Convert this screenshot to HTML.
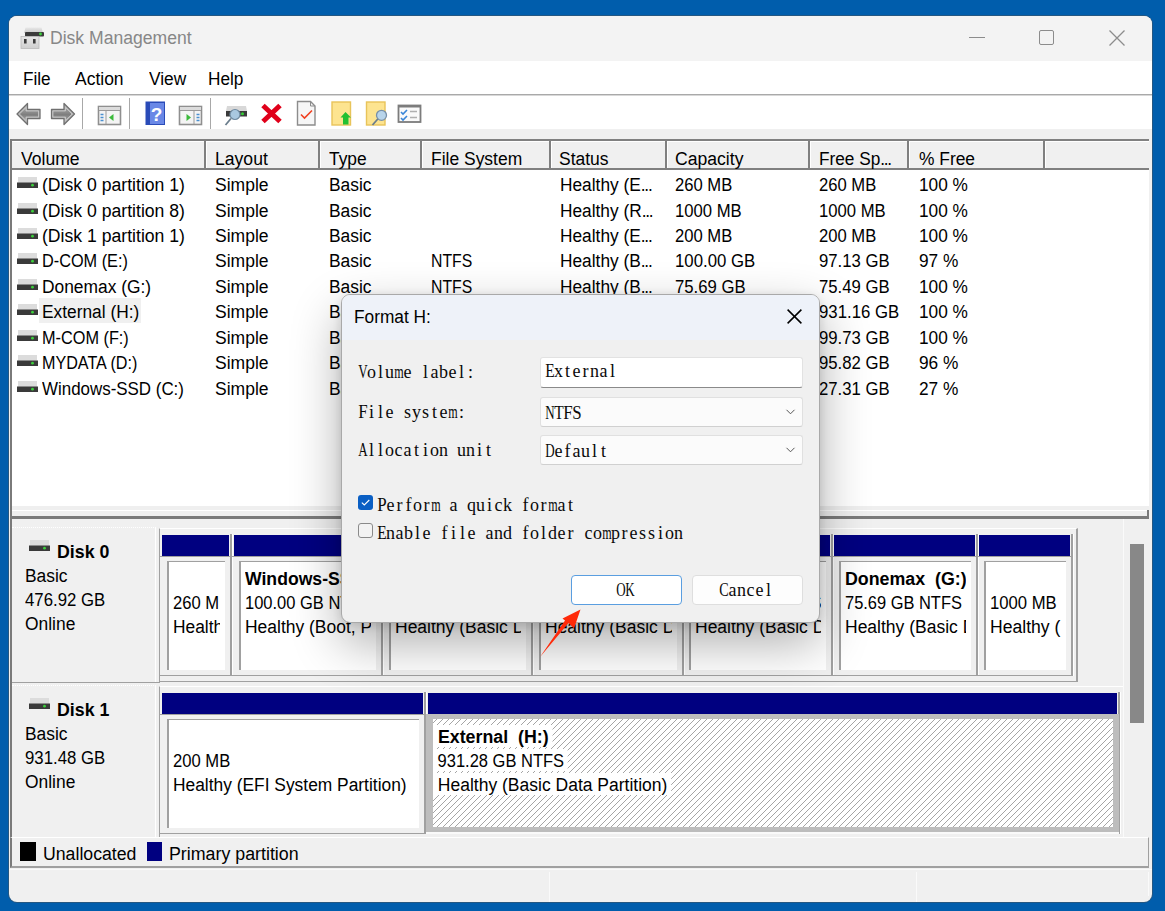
<!DOCTYPE html>
<html><head><meta charset="utf-8">
<style>
*{margin:0;padding:0;box-sizing:border-box}
html,body{width:1165px;height:911px;overflow:hidden}
body{background:#005dac;font-family:"Liberation Sans",sans-serif;font-size:18px;color:#000;position:relative}
.a{position:absolute}
.t{position:absolute;white-space:pre;line-height:18px;font-size:18px;height:18px}
.b{font-weight:bold}
.el{letter-spacing:-1.3px}
.win{left:9px;top:16px;width:1143px;height:886px;border-radius:8px;background:#f0f0f0;box-shadow:0 0 0 1px rgba(80,80,80,.45)}
.title{left:9px;top:16px;width:1143px;height:45px;background:#f3f3f3;border-radius:8px 8px 0 0}
.menu{left:9px;top:61px;width:1143px;height:33px;background:#fff}
.menuline{left:9px;top:94px;width:1143px;height:2px;background:linear-gradient(#a9a9a9 50%,#d8d8d8 50%)}
.tool{left:9px;top:96px;width:1143px;height:33px;background:#fff}
.sep{width:1px;background:#a8a8a8;top:98px;height:31px}
.lv{left:10px;top:139px;width:1139px;height:371px;background:#fff;border-top:2px solid #808080;border-left:2px solid #808080}
.hdr{top:141px;height:29px;background:#f0f0f0;border-top:1px solid #fff;border-bottom:2px solid #808080}
.hs{top:141px;width:2px;height:27px;background:#808080}
.hw{top:142px;width:1px;height:26px;background:#fff}
.ico{position:absolute;width:21px;height:12px}
svg{position:absolute;overflow:visible}
.hatch{background-color:#fff;background-image:repeating-linear-gradient(-45deg,#b0b0b0 0,#b0b0b0 1px,transparent 1px,transparent 4.24px)}
.mono{font-family:"Liberation Serif",serif;position:absolute;white-space:nowrap;color:#0a0a0a;font-size:18px;line-height:18px;height:18px}
.mono i{display:inline-block;width:9px;text-align:center;font-style:normal;height:18px;vertical-align:top;position:relative}
.mono b{position:absolute;left:50%;top:0;font-weight:normal}
</style></head><body>
<div class="a win"></div>
<div class="a title"></div>
<svg style="left:21px;top:26px" width="24" height="23" viewBox="0 0 24 23">
<defs><linearGradient id="gt" x1="0" y1="0" x2="0" y2="1"><stop offset="0" stop-color="#e8e8e8"/><stop offset="1" stop-color="#c8c8c8"/></linearGradient>
<linearGradient id="gb" x1="0" y1="0" x2="0" y2="1"><stop offset="0" stop-color="#e6e6e6"/><stop offset="1" stop-color="#cfcfcf"/></linearGradient></defs>
<path d="M4.5 1.5h16l1.5 5.5h-19z" fill="url(#gt)"/>
<rect x="4" y="6" width="19" height="4.5" rx="1" fill="#3a3a3a"/>
<circle cx="19.5" cy="8" r="1.4" fill="#3fd13f"/>
<rect x="0" y="10.5" width="18" height="12" fill="url(#gb)" stroke="#b8b8b8" stroke-width=".8"/>
<rect x="3" y="13" width="2.6" height="4.5" fill="#3c3c3c"/>
<rect x="12" y="13" width="2.6" height="4.5" fill="#3c3c3c"/>
</svg>
<div class="t" style="left:50px;top:29px;color:#878787;transform:scaleX(0.976);transform-origin:0 0">Disk Management</div>
<div class="a" style="left:969px;top:37px;width:16px;height:1px;background:#8c8c8c"></div>
<div class="a" style="left:1039px;top:30px;width:15px;height:15px;border:1.3px solid #8c8c8c;border-radius:2px"></div>
<svg style="left:1109px;top:30px" width="16" height="16" viewBox="0 0 16 16"><path d="M0.5 0.5L15.5 15.5M15.5 0.5L0.5 15.5" stroke="#8c8c8c" stroke-width="1.3"/></svg>
<div class="a menu"></div>
<div class="a menuline"></div>
<div class="t" style="left:23px;top:70px;transform:scaleX(0.954);transform-origin:0 0">File</div>
<div class="t" style="left:75px;top:70px;transform:scaleX(0.971);transform-origin:0 0">Action</div>
<div class="t" style="left:149px;top:70px;transform:scaleX(0.962);transform-origin:0 0">View</div>
<div class="t" style="left:208px;top:70px;transform:scaleX(0.957);transform-origin:0 0">Help</div>
<div class="a tool"></div>
<div class="a sep" style="left:82px"></div>
<div class="a sep" style="left:129px"></div>
<div class="a sep" style="left:210px"></div>
<svg style="left:0;top:0" width="1" height="1">
<defs>
<linearGradient id="ga" x1="0" y1="0" x2="0" y2="1"><stop offset="0" stop-color="#a8a8a8"/><stop offset=".55" stop-color="#7e7e7e"/><stop offset="1" stop-color="#a4a4a4"/></linearGradient>
</defs></svg>
<svg style="left:0;top:0" width="1165" height="140" viewBox="0 0 1165 140">
<path d="M17 114L27.5 103.5V109.5H40V118.5H27.5V124.5Z" fill="#b9b9b9" stroke="#707070" stroke-width="1.3" stroke-linejoin="round"/><path d="M19.5 114L26 107.5V111H38.5V117H26V120.5Z" fill="url(#ga)" stroke="#cfcfcf" stroke-width=".7"/>
<path d="M74.5 114L64 103.5V109.5H51.5V118.5H64V124.5Z" fill="#b9b9b9" stroke="#707070" stroke-width="1.3" stroke-linejoin="round"/><path d="M72 114L65.5 107.5V111H53V117H65.5V120.5Z" fill="url(#ga)" stroke="#cfcfcf" stroke-width=".7"/>
<!-- window left -->
<rect x="98.5" y="106.5" width="22" height="18" fill="#f4f4f4" stroke="#8f8f8f" stroke-width="1.6"/>
<rect x="99" y="107" width="21" height="3" fill="#dcdcdc"/>
<line x1="99" y1="110.5" x2="120" y2="110.5" stroke="#9a9a9a" stroke-width="1"/>
<line x1="106" y1="111" x2="106" y2="124" stroke="#9a9a9a" stroke-width="1"/>
<path d="M100.5 114.5h3M100.5 117.5h3M100.5 120.5h3" stroke="#4a90d0" stroke-width="1.3"/>
<path d="M109 117.5L113.5 114V121Z" fill="#3cba3c"/>
<!-- help -->
<rect x="145.5" y="101.5" width="19.5" height="23.5" fill="#2a4bb8"/>
<rect x="150" y="103" width="14" height="21" fill="#6a88e6"/>
<text x="156.5" y="121" font-family="Liberation Sans" font-weight="bold" font-size="19" fill="#fff" text-anchor="middle">?</text>
<!-- window right -->
<rect x="179.5" y="106.5" width="22" height="18" fill="#f4f4f4" stroke="#8f8f8f" stroke-width="1.6"/>
<rect x="180" y="107" width="21" height="3" fill="#dcdcdc"/>
<line x1="180" y1="110.5" x2="201" y2="110.5" stroke="#9a9a9a" stroke-width="1"/>
<line x1="194" y1="111" x2="194" y2="124" stroke="#9a9a9a" stroke-width="1"/>
<path d="M196.5 114.5h3M196.5 117.5h3M196.5 120.5h3" stroke="#4a90d0" stroke-width="1.3"/>
<path d="M191 117.5L186.5 114V121Z" fill="#3cba3c"/>
<!-- disk magnifier -->
<path d="M227 106h19l1 5h-21z" fill="#d8d8d8"/>
<rect x="226" y="111" width="21" height="5.5" fill="#3a3a3a"/>
<circle cx="242.5" cy="113.8" r="1.5" fill="#34d034"/>
<circle cx="235" cy="114.5" r="5" fill="#a9c8e0" stroke="#6f8aa0" stroke-width="1.2"/>
<line x1="231" y1="118.5" x2="225.5" y2="125" stroke="#6a7d8c" stroke-width="1.8"/>
<!-- red x -->
<path d="M263 105.5L280 121.5M280 105.5L263 121.5" stroke="#e0001a" stroke-width="5"/>
<!-- doc -->
<path d="M297.5 101.5h13l4.5 4.5v19h-17.5z" fill="#f6f6f6" stroke="#8c8c8c" stroke-width="1.4"/>
<path d="M310.5 101.5v4.5h4.5" fill="none" stroke="#8c8c8c" stroke-width="1"/>
<path d="M301 114.5L304.5 118L312 110.5" fill="none" stroke="#f04020" stroke-width="1.6"/>
<!-- yellow up -->
<rect x="332" y="102" width="18.5" height="23" fill="#fde490" stroke="#e8c45a" stroke-width="1.4"/>
<path d="M340.5 117.5L345.5 112L351 117.5H348.5V124.5H343V117.5Z" fill="#22c032"/>
<!-- yellow magnifier -->
<rect x="366.5" y="102" width="18.5" height="23" fill="#fde490" stroke="#e8c45a" stroke-width="1.4"/>
<circle cx="381.5" cy="115.3" r="5" fill="#b8d4ea" stroke="#7890a8" stroke-width="1.3"/>
<line x1="377.8" y1="119" x2="372.5" y2="125" stroke="#6a7d8c" stroke-width="1.8"/>
<!-- checklist -->
<rect x="398.5" y="105.5" width="22" height="16.5" fill="#fafafa" stroke="#7c7c7c" stroke-width="1.8"/>
<rect x="398" y="105" width="23" height="2.5" fill="#7c7c7c"/>
<path d="M401 112l2 2 4-4M401 118l2 2 4-4" fill="none" stroke="#3a86d8" stroke-width="1.6"/>
<path d="M410 111.5h7M410 117.5h7" stroke="#b0b0b0" stroke-width="1.3"/>
</svg>
<div class="a lv"></div>
<div class="a hdr" style="left:12px;width:1137px"></div>
<div class="a hs" style="left:204px"></div><div class="a hw" style="left:206px"></div>
<div class="a hs" style="left:318px"></div><div class="a hw" style="left:320px"></div>
<div class="a hs" style="left:420px"></div><div class="a hw" style="left:422px"></div>
<div class="a hs" style="left:549px"></div><div class="a hw" style="left:551px"></div>
<div class="a hs" style="left:665px"></div><div class="a hw" style="left:667px"></div>
<div class="a hs" style="left:808px"></div><div class="a hw" style="left:810px"></div>
<div class="a hs" style="left:907px"></div><div class="a hw" style="left:909px"></div>
<div class="a hs" style="left:1043px"></div><div class="a hw" style="left:1045px"></div>
<div class="t" style="left:21px;top:150px;transform:scaleX(0.976);transform-origin:0 0">Volume</div>
<div class="t" style="left:215px;top:150px;transform:scaleX(0.977);transform-origin:0 0">Layout</div>
<div class="t" style="left:329px;top:150px;transform:scaleX(0.966);transform-origin:0 0">Type</div>
<div class="t" style="left:431px;top:150px;transform:scaleX(0.970);transform-origin:0 0">File System</div>
<div class="t" style="left:559px;top:150px;transform:scaleX(0.971);transform-origin:0 0">Status</div>
<div class="t" style="left:675px;top:150px;transform:scaleX(0.977);transform-origin:0 0">Capacity</div>
<div class="t" style="left:819px;top:150px;transform:scaleX(0.957);transform-origin:0 0">Free Sp<span class="el">...</span></div>
<div class="t" style="left:919px;top:150px;transform:scaleX(0.966);transform-origin:0 0">% Free</div>
<div class="a" style="left:39px;top:298px;width:102px;height:25px;background:#f0f0f0"></div>
<svg style="left:17px;top:177px" width="21" height="12" viewBox="0 0 21 12"><rect x="1" y="0" width="19" height="6" fill="#dcdcdc"/><rect x="0" y="5.5" width="21" height="5.5" fill="#3a3a3a"/><circle cx="15.5" cy="8.2" r="1.4" fill="#3bd03b"/></svg>
<div class="t" style="left:42px;top:176px;transform:scaleX(0.979);transform-origin:0 0">(Disk 0 partition 1)</div>
<div class="t" style="left:215px;top:176px;transform:scaleX(0.973);transform-origin:0 0">Simple</div>
<div class="t" style="left:329px;top:176px;transform:scaleX(0.967);transform-origin:0 0">Basic</div>
<div class="t" style="left:560px;top:176px;transform:scaleX(0.961);transform-origin:0 0">Healthy (E<span class="el">...</span></div>
<div class="t" style="left:675px;top:176px;transform:scaleX(0.923);transform-origin:0 0">260 MB</div>
<div class="t" style="left:819px;top:176px;transform:scaleX(0.923);transform-origin:0 0">260 MB</div>
<div class="t" style="left:919px;top:176px;transform:scaleX(0.958);transform-origin:0 0">100 %</div>
<svg style="left:17px;top:203px" width="21" height="12" viewBox="0 0 21 12"><rect x="1" y="0" width="19" height="6" fill="#dcdcdc"/><rect x="0" y="5.5" width="21" height="5.5" fill="#3a3a3a"/><circle cx="15.5" cy="8.2" r="1.4" fill="#3bd03b"/></svg>
<div class="t" style="left:42px;top:202px;transform:scaleX(0.979);transform-origin:0 0">(Disk 0 partition 8)</div>
<div class="t" style="left:215px;top:202px;transform:scaleX(0.973);transform-origin:0 0">Simple</div>
<div class="t" style="left:329px;top:202px;transform:scaleX(0.967);transform-origin:0 0">Basic</div>
<div class="t" style="left:560px;top:202px;transform:scaleX(0.960);transform-origin:0 0">Healthy (R<span class="el">...</span></div>
<div class="t" style="left:675px;top:202px;transform:scaleX(0.926);transform-origin:0 0">1000 MB</div>
<div class="t" style="left:819px;top:202px;transform:scaleX(0.926);transform-origin:0 0">1000 MB</div>
<div class="t" style="left:919px;top:202px;transform:scaleX(0.958);transform-origin:0 0">100 %</div>
<svg style="left:17px;top:228px" width="21" height="12" viewBox="0 0 21 12"><rect x="1" y="0" width="19" height="6" fill="#dcdcdc"/><rect x="0" y="5.5" width="21" height="5.5" fill="#3a3a3a"/><circle cx="15.5" cy="8.2" r="1.4" fill="#3bd03b"/></svg>
<div class="t" style="left:42px;top:227px;transform:scaleX(0.979);transform-origin:0 0">(Disk 1 partition 1)</div>
<div class="t" style="left:215px;top:227px;transform:scaleX(0.973);transform-origin:0 0">Simple</div>
<div class="t" style="left:329px;top:227px;transform:scaleX(0.967);transform-origin:0 0">Basic</div>
<div class="t" style="left:560px;top:227px;transform:scaleX(0.961);transform-origin:0 0">Healthy (E<span class="el">...</span></div>
<div class="t" style="left:675px;top:227px;transform:scaleX(0.923);transform-origin:0 0">200 MB</div>
<div class="t" style="left:819px;top:227px;transform:scaleX(0.923);transform-origin:0 0">200 MB</div>
<div class="t" style="left:919px;top:227px;transform:scaleX(0.958);transform-origin:0 0">100 %</div>
<svg style="left:17px;top:253px" width="21" height="12" viewBox="0 0 21 12"><rect x="1" y="0" width="19" height="6" fill="#dcdcdc"/><rect x="0" y="5.5" width="21" height="5.5" fill="#3a3a3a"/><circle cx="15.5" cy="8.2" r="1.4" fill="#3bd03b"/></svg>
<div class="t" style="left:42px;top:252px;transform:scaleX(0.904);transform-origin:0 0">D-COM (E:)</div>
<div class="t" style="left:215px;top:252px;transform:scaleX(0.973);transform-origin:0 0">Simple</div>
<div class="t" style="left:329px;top:252px;transform:scaleX(0.967);transform-origin:0 0">Basic</div>
<div class="t" style="left:431px;top:252px;transform:scaleX(0.878);transform-origin:0 0">NTFS</div>
<div class="t" style="left:560px;top:252px;transform:scaleX(0.961);transform-origin:0 0">Healthy (B<span class="el">...</span></div>
<div class="t" style="left:675px;top:252px;transform:scaleX(0.932);transform-origin:0 0">100.00 GB</div>
<div class="t" style="left:819px;top:252px;transform:scaleX(0.929);transform-origin:0 0">97.13 GB</div>
<div class="t" style="left:919px;top:252px;transform:scaleX(0.960);transform-origin:0 0">97 %</div>
<svg style="left:17px;top:279px" width="21" height="12" viewBox="0 0 21 12"><rect x="1" y="0" width="19" height="6" fill="#dcdcdc"/><rect x="0" y="5.5" width="21" height="5.5" fill="#3a3a3a"/><circle cx="15.5" cy="8.2" r="1.4" fill="#3bd03b"/></svg>
<div class="t" style="left:42px;top:278px;transform:scaleX(0.965);transform-origin:0 0">Donemax (G:)</div>
<div class="t" style="left:215px;top:278px;transform:scaleX(0.973);transform-origin:0 0">Simple</div>
<div class="t" style="left:329px;top:278px;transform:scaleX(0.967);transform-origin:0 0">Basic</div>
<div class="t" style="left:431px;top:278px;transform:scaleX(0.878);transform-origin:0 0">NTFS</div>
<div class="t" style="left:560px;top:278px;transform:scaleX(0.961);transform-origin:0 0">Healthy (B<span class="el">...</span></div>
<div class="t" style="left:675px;top:278px;transform:scaleX(0.929);transform-origin:0 0">75.69 GB</div>
<div class="t" style="left:819px;top:278px;transform:scaleX(0.929);transform-origin:0 0">75.49 GB</div>
<div class="t" style="left:919px;top:278px;transform:scaleX(0.958);transform-origin:0 0">100 %</div>
<svg style="left:17px;top:304px" width="21" height="12" viewBox="0 0 21 12"><rect x="1" y="0" width="19" height="6" fill="#dcdcdc"/><rect x="0" y="5.5" width="21" height="5.5" fill="#3a3a3a"/><circle cx="15.5" cy="8.2" r="1.4" fill="#3bd03b"/></svg>
<div class="t" style="left:42px;top:303px;transform:scaleX(0.963);transform-origin:0 0">External (H:)</div>
<div class="t" style="left:215px;top:303px;transform:scaleX(0.973);transform-origin:0 0">Simple</div>
<div class="t" style="left:329px;top:303px;transform:scaleX(0.967);transform-origin:0 0">Basic</div>
<div class="t" style="left:431px;top:303px;transform:scaleX(0.878);transform-origin:0 0">NTFS</div>
<div class="t" style="left:560px;top:303px;transform:scaleX(0.961);transform-origin:0 0">Healthy (B<span class="el">...</span></div>
<div class="t" style="left:675px;top:303px;transform:scaleX(0.932);transform-origin:0 0">931.28 GB</div>
<div class="t" style="left:819px;top:303px;transform:scaleX(0.932);transform-origin:0 0">931.16 GB</div>
<div class="t" style="left:919px;top:303px;transform:scaleX(0.958);transform-origin:0 0">100 %</div>
<svg style="left:17px;top:330px" width="21" height="12" viewBox="0 0 21 12"><rect x="1" y="0" width="19" height="6" fill="#dcdcdc"/><rect x="0" y="5.5" width="21" height="5.5" fill="#3a3a3a"/><circle cx="15.5" cy="8.2" r="1.4" fill="#3bd03b"/></svg>
<div class="t" style="left:42px;top:329px;transform:scaleX(0.904);transform-origin:0 0">M-COM (F:)</div>
<div class="t" style="left:215px;top:329px;transform:scaleX(0.973);transform-origin:0 0">Simple</div>
<div class="t" style="left:329px;top:329px;transform:scaleX(0.967);transform-origin:0 0">Basic</div>
<div class="t" style="left:431px;top:329px;transform:scaleX(0.878);transform-origin:0 0">NTFS</div>
<div class="t" style="left:560px;top:329px;transform:scaleX(0.961);transform-origin:0 0">Healthy (B<span class="el">...</span></div>
<div class="t" style="left:675px;top:329px;transform:scaleX(0.932);transform-origin:0 0">200.00 GB</div>
<div class="t" style="left:819px;top:329px;transform:scaleX(0.929);transform-origin:0 0">99.73 GB</div>
<div class="t" style="left:919px;top:329px;transform:scaleX(0.958);transform-origin:0 0">100 %</div>
<svg style="left:17px;top:355px" width="21" height="12" viewBox="0 0 21 12"><rect x="1" y="0" width="19" height="6" fill="#dcdcdc"/><rect x="0" y="5.5" width="21" height="5.5" fill="#3a3a3a"/><circle cx="15.5" cy="8.2" r="1.4" fill="#3bd03b"/></svg>
<div class="t" style="left:42px;top:354px;transform:scaleX(0.896);transform-origin:0 0">MYDATA (D:)</div>
<div class="t" style="left:215px;top:354px;transform:scaleX(0.973);transform-origin:0 0">Simple</div>
<div class="t" style="left:329px;top:354px;transform:scaleX(0.967);transform-origin:0 0">Basic</div>
<div class="t" style="left:431px;top:354px;transform:scaleX(0.878);transform-origin:0 0">NTFS</div>
<div class="t" style="left:560px;top:354px;transform:scaleX(0.961);transform-origin:0 0">Healthy (B<span class="el">...</span></div>
<div class="t" style="left:675px;top:354px;transform:scaleX(0.932);transform-origin:0 0">100.00 GB</div>
<div class="t" style="left:819px;top:354px;transform:scaleX(0.929);transform-origin:0 0">95.82 GB</div>
<div class="t" style="left:919px;top:354px;transform:scaleX(0.960);transform-origin:0 0">96 %</div>
<svg style="left:17px;top:381px" width="21" height="12" viewBox="0 0 21 12"><rect x="1" y="0" width="19" height="6" fill="#dcdcdc"/><rect x="0" y="5.5" width="21" height="5.5" fill="#3a3a3a"/><circle cx="15.5" cy="8.2" r="1.4" fill="#3bd03b"/></svg>
<div class="t" style="left:42px;top:380px;transform:scaleX(0.940);transform-origin:0 0">Windows-SSD (C:)</div>
<div class="t" style="left:215px;top:380px;transform:scaleX(0.973);transform-origin:0 0">Simple</div>
<div class="t" style="left:329px;top:380px;transform:scaleX(0.967);transform-origin:0 0">Basic</div>
<div class="t" style="left:431px;top:380px;transform:scaleX(0.878);transform-origin:0 0">NTFS</div>
<div class="t" style="left:560px;top:380px;transform:scaleX(0.961);transform-origin:0 0">Healthy (B<span class="el">...</span></div>
<div class="t" style="left:675px;top:380px;transform:scaleX(0.932);transform-origin:0 0">100.00 GB</div>
<div class="t" style="left:819px;top:380px;transform:scaleX(0.929);transform-origin:0 0">27.31 GB</div>
<div class="t" style="left:919px;top:380px;transform:scaleX(0.960);transform-origin:0 0">27 %</div>
<div class="a" style="left:12px;top:506px;width:1137px;height:4px;background:#efefef"></div>
<div class="a" style="left:12px;top:510px;width:1137px;height:1px;background:#fff"></div>
<div class="a" style="left:12px;top:511px;width:1137px;height:5px;background:#efefef"></div>
<div class="a" style="left:10px;top:516px;width:1139px;height:3px;background:#7a7a7a"></div>
<div class="a" style="left:1147px;top:510px;width:2px;height:8px;background:#7a7a7a"></div>
<div class="a" style="left:10px;top:139px;width:2px;height:728px;background:#7a7a7a"></div>
<div class="a" style="left:1123px;top:519px;width:1px;height:318px;background:#fafafa"></div>
<div class="a" style="left:1130px;top:544px;width:14px;height:179px;background:#888"></div>
<div class="a" style="left:12px;top:527px;width:144px;height:1px;border-top:1px dotted #fff"></div>
<div class="a" style="left:155px;top:528px;width:1px;height:154px;background:#fff"></div>
<div class="a" style="left:12px;top:682px;width:148px;height:1px;background:#a0a0a0"></div>
<svg style="left:29px;top:540px" width="21" height="12" viewBox="0 0 21 12"><rect x="1" y="0" width="19" height="6" fill="#dcdcdc"/><rect x="0" y="5.5" width="21" height="5.5" fill="#3a3a3a"/><circle cx="15.5" cy="8.2" r="1.4" fill="#3bd03b"/></svg>
<div class="t b" style="left:57px;top:543px;transform:scaleX(0.987);transform-origin:0 0">Disk 0</div>
<div class="t" style="left:25px;top:567px;transform:scaleX(0.967);transform-origin:0 0">Basic</div>
<div class="t" style="left:25px;top:591px;transform:scaleX(0.932);transform-origin:0 0">476.92 GB</div>
<div class="t" style="left:25px;top:615px;transform:scaleX(0.967);transform-origin:0 0">Online</div>
<div class="a" style="left:159px;top:528px;width:919px;height:154px;border-top:1px solid #fff;border-left:1px solid #a0a0a0;border-right:2px solid #a0a0a0;border-bottom:1px solid #a0a0a0"></div>
<div class="a" style="left:162px;top:535px;width:67px;height:21px;background:#000080"></div>
<div class="a" style="left:160px;top:556px;width:70px;height:1px;background:#a0a0a0"></div>
<div class="a" style="left:160px;top:675px;width:71px;height:1px;background:#a0a0a0"></div>
<div class="a" style="left:230px;top:534px;width:2px;height:142px;background:#a0a0a0"></div>
<div class="a" style="left:232px;top:534px;width:1px;height:142px;background:#fff"></div>
<div class="a" style="left:167px;top:561px;width:58px;height:109px;background:#fff;border-top:1px solid #a0a0a0;border-left:2px solid #a0a0a0"></div>
<div class="a" style="left:173px;top:567px;width:47px;height:86px;overflow:hidden">
<div class="t" style="left:0;top:27px;transform:scaleX(0.923);transform-origin:0 0">260 MB</div>
<div class="t" style="left:0;top:51px;transform:scaleX(0.965);transform-origin:0 0">Healthy (EFI System Partition)</div>
</div>
<div class="a" style="left:234px;top:535px;width:146px;height:21px;background:#000080"></div>
<div class="a" style="left:232px;top:556px;width:149px;height:1px;background:#a0a0a0"></div>
<div class="a" style="left:232px;top:675px;width:150px;height:1px;background:#a0a0a0"></div>
<div class="a" style="left:381px;top:534px;width:2px;height:142px;background:#a0a0a0"></div>
<div class="a" style="left:383px;top:534px;width:1px;height:142px;background:#fff"></div>
<div class="a" style="left:239px;top:561px;width:137px;height:109px;background:#fff;border-top:1px solid #a0a0a0;border-left:2px solid #a0a0a0"></div>
<div class="a" style="left:245px;top:567px;width:126px;height:86px;overflow:hidden">
<div class="t b" style="left:0;top:3px;transform:scaleX(0.979);transform-origin:0 0">Windows-SSD  (C:)</div>
<div class="t" style="left:0;top:27px;transform:scaleX(0.916);transform-origin:0 0">100.00 GB NTFS</div>
<div class="t" style="left:0;top:51px;transform:scaleX(0.970);transform-origin:0 0">Healthy (Boot, Page File, Crash Dump, Basic Data Partition)</div>
</div>
<div class="a" style="left:384px;top:535px;width:146px;height:21px;background:#000080"></div>
<div class="a" style="left:382px;top:556px;width:149px;height:1px;background:#a0a0a0"></div>
<div class="a" style="left:382px;top:675px;width:150px;height:1px;background:#a0a0a0"></div>
<div class="a" style="left:531px;top:534px;width:2px;height:142px;background:#a0a0a0"></div>
<div class="a" style="left:533px;top:534px;width:1px;height:142px;background:#fff"></div>
<div class="a" style="left:389px;top:561px;width:137px;height:109px;background:#fff;border-top:1px solid #a0a0a0;border-left:2px solid #a0a0a0"></div>
<div class="a" style="left:395px;top:567px;width:126px;height:86px;overflow:hidden">
<div class="t b" style="left:0;top:3px;transform:scaleX(0.962);transform-origin:0 0">MYDATA  (D:)</div>
<div class="t" style="left:0;top:27px;transform:scaleX(0.916);transform-origin:0 0">100.00 GB NTFS</div>
<div class="t" style="left:0;top:51px;transform:scaleX(0.972);transform-origin:0 0">Healthy (Basic Data Partition)</div>
</div>
<div class="a" style="left:534px;top:535px;width:147px;height:21px;background:#000080"></div>
<div class="a" style="left:532px;top:556px;width:150px;height:1px;background:#a0a0a0"></div>
<div class="a" style="left:532px;top:675px;width:151px;height:1px;background:#a0a0a0"></div>
<div class="a" style="left:682px;top:534px;width:2px;height:142px;background:#a0a0a0"></div>
<div class="a" style="left:684px;top:534px;width:1px;height:142px;background:#fff"></div>
<div class="a" style="left:539px;top:561px;width:138px;height:109px;background:#fff;border-top:1px solid #a0a0a0;border-left:2px solid #a0a0a0"></div>
<div class="a" style="left:545px;top:567px;width:127px;height:86px;overflow:hidden">
<div class="t b" style="left:0;top:3px;transform:scaleX(0.966);transform-origin:0 0">D-COM  (E:)</div>
<div class="t" style="left:0;top:27px;transform:scaleX(0.916);transform-origin:0 0">100.00 GB NTFS</div>
<div class="t" style="left:0;top:51px;transform:scaleX(0.972);transform-origin:0 0">Healthy (Basic Data Partition)</div>
</div>
<div class="a" style="left:684px;top:535px;width:146px;height:21px;background:#000080"></div>
<div class="a" style="left:682px;top:556px;width:149px;height:1px;background:#a0a0a0"></div>
<div class="a" style="left:682px;top:675px;width:150px;height:1px;background:#a0a0a0"></div>
<div class="a" style="left:831px;top:534px;width:2px;height:142px;background:#a0a0a0"></div>
<div class="a" style="left:833px;top:534px;width:1px;height:142px;background:#fff"></div>
<div class="a" style="left:689px;top:561px;width:137px;height:109px;background:#fff;border-top:1px solid #a0a0a0;border-left:2px solid #a0a0a0"></div>
<div class="a" style="left:695px;top:567px;width:126px;height:86px;overflow:hidden">
<div class="t b" style="left:0;top:3px;transform:scaleX(0.966);transform-origin:0 0">M-COM  (F:)</div>
<div class="t" style="left:0;top:27px;transform:scaleX(0.916);transform-origin:0 0">200.00 GB NTFS</div>
<div class="t" style="left:0;top:51px;transform:scaleX(0.972);transform-origin:0 0">Healthy (Basic Data Partition)</div>
</div>
<div class="a" style="left:834px;top:535px;width:141px;height:21px;background:#000080"></div>
<div class="a" style="left:832px;top:556px;width:144px;height:1px;background:#a0a0a0"></div>
<div class="a" style="left:832px;top:675px;width:145px;height:1px;background:#a0a0a0"></div>
<div class="a" style="left:976px;top:534px;width:2px;height:142px;background:#a0a0a0"></div>
<div class="a" style="left:978px;top:534px;width:1px;height:142px;background:#fff"></div>
<div class="a" style="left:839px;top:561px;width:132px;height:109px;background:#fff;border-top:1px solid #a0a0a0;border-left:2px solid #a0a0a0"></div>
<div class="a" style="left:845px;top:567px;width:121px;height:86px;overflow:hidden">
<div class="t b" style="left:0;top:3px;transform:scaleX(0.989);transform-origin:0 0">Donemax  (G:)</div>
<div class="t" style="left:0;top:27px;transform:scaleX(0.913);transform-origin:0 0">75.69 GB NTFS</div>
<div class="t" style="left:0;top:51px;transform:scaleX(0.972);transform-origin:0 0">Healthy (Basic Data Partition)</div>
</div>
<div class="a" style="left:979px;top:535px;width:91px;height:21px;background:#000080"></div>
<div class="a" style="left:977px;top:556px;width:94px;height:1px;background:#a0a0a0"></div>
<div class="a" style="left:977px;top:675px;width:95px;height:1px;background:#a0a0a0"></div>
<div class="a" style="left:1071px;top:534px;width:2px;height:142px;background:#a0a0a0"></div>
<div class="a" style="left:1073px;top:534px;width:1px;height:142px;background:#fff"></div>
<div class="a" style="left:984px;top:561px;width:82px;height:109px;background:#fff;border-top:1px solid #a0a0a0;border-left:2px solid #a0a0a0"></div>
<div class="a" style="left:990px;top:567px;width:71px;height:86px;overflow:hidden">
<div class="t" style="left:0;top:27px;transform:scaleX(0.926);transform-origin:0 0">1000 MB</div>
<div class="t" style="left:0;top:51px;transform:scaleX(0.977);transform-origin:0 0">Healthy (Recovery Partition)</div>
</div>
<div class="a" style="left:12px;top:685px;width:144px;height:1px;border-top:1px dotted #fff"></div>
<div class="a" style="left:155px;top:686px;width:1px;height:154px;background:#fff"></div>
<div class="a" style="left:12px;top:840px;width:148px;height:1px;background:#a0a0a0"></div>
<svg style="left:29px;top:698px" width="21" height="12" viewBox="0 0 21 12"><rect x="1" y="0" width="19" height="6" fill="#dcdcdc"/><rect x="0" y="5.5" width="21" height="5.5" fill="#3a3a3a"/><circle cx="15.5" cy="8.2" r="1.4" fill="#3bd03b"/></svg>
<div class="t b" style="left:57px;top:701px;transform:scaleX(0.987);transform-origin:0 0">Disk 1</div>
<div class="t" style="left:25px;top:725px;transform:scaleX(0.967);transform-origin:0 0">Basic</div>
<div class="t" style="left:25px;top:749px;transform:scaleX(0.932);transform-origin:0 0">931.48 GB</div>
<div class="t" style="left:25px;top:773px;transform:scaleX(0.967);transform-origin:0 0">Online</div>
<div class="a" style="left:159px;top:686px;width:964px;height:160px;border-top:1px solid #fff;border-left:1px solid #a0a0a0"></div>
<div class="a" style="left:162px;top:693px;width:261px;height:21px;background:#000080"></div>
<div class="a" style="left:160px;top:714px;width:264px;height:1px;background:#a0a0a0"></div>
<div class="a" style="left:160px;top:833px;width:265px;height:1px;background:#a0a0a0"></div>
<div class="a" style="left:424px;top:692px;width:2px;height:142px;background:#a0a0a0"></div>
<div class="a" style="left:426px;top:692px;width:1px;height:142px;background:#fff"></div>
<div class="a" style="left:167px;top:719px;width:252px;height:109px;background:#fff;border-top:1px solid #a0a0a0;border-left:2px solid #a0a0a0"></div>
<div class="a" style="left:173px;top:725px;width:241px;height:86px;overflow:hidden">
<div class="t" style="left:0;top:27px;transform:scaleX(0.923);transform-origin:0 0">200 MB</div>
<div class="t" style="left:0;top:51px;transform:scaleX(0.965);transform-origin:0 0">Healthy (EFI System Partition)</div>
</div>
<div class="a" style="left:428px;top:693px;width:689px;height:21px;background:#000080"></div>
<div class="a" style="left:426px;top:714px;width:692px;height:1px;background:#a0a0a0"></div>
<div class="a" style="left:426px;top:833px;width:693px;height:1px;background:#a0a0a0"></div>
<div class="a" style="left:1118px;top:692px;width:2px;height:142px;background:#a0a0a0"></div>
<div class="a" style="left:1120px;top:692px;width:1px;height:142px;background:#fff"></div>
<div class="a" style="left:426px;top:714px;width:693px;height:118px;background:#bdbdbd"></div>
<div class="a" style="left:426px;top:832px;width:693px;height:2px;background:#fafafa"></div>
<svg style="left:433px;top:719px" width="680" height="108"><defs><pattern id="hp" width="6" height="6" patternUnits="userSpaceOnUse" patternTransform="translate(-2 0)"><path d="M-1.5 1.5L1.5-1.5M0 6L6 0M4.5 7.5L7.5 4.5" stroke="#a0a0a0" stroke-width="0.95"/></pattern></defs><rect width="100%" height="100%" fill="#fff"/><rect width="100%" height="100%" fill="url(#hp)"/></svg>
<div class="a" style="left:433px;top:725px;width:679px;height:86px;overflow:hidden">
<div class="t b" style="left:0;top:0px;background:#fff;height:22px;padding:3px 4px 0 5px;transform:scaleX(0.988);transform-origin:0 0">External  (H:)</div>
<div class="t" style="left:0;top:24px;background:#fff;height:22px;padding:3px 4px 0 5px;transform:scaleX(0.916);transform-origin:0 0">931.28 GB NTFS</div>
<div class="t" style="left:0;top:48px;background:#fff;height:22px;padding:3px 4px 0 5px;transform:scaleX(0.972);transform-origin:0 0">Healthy (Basic Data Partition)</div>
</div>
<div class="a" style="left:10px;top:837px;width:1139px;height:31px;background:#f0f0f0;border-top:1px solid #fff;border-left:2px solid #7a7a7a;border-right:1px solid #a0a0a0;border-bottom:2px solid #a0a0a0"></div>
<div class="a" style="left:20px;top:842px;width:16px;height:19px;background:#000"></div>
<div class="t" style="left:43px;top:845px;transform:scaleX(0.983);transform-origin:0 0">Unallocated</div>
<div class="a" style="left:147px;top:842px;width:15px;height:19px;background:#000080"></div>
<div class="t" style="left:169px;top:845px;transform:scaleX(0.989);transform-origin:0 0">Primary partition</div>
<div class="a" style="left:9px;top:869px;width:1143px;height:1px;background:#fafafa"></div>
<div class="a" style="left:549px;top:872px;width:1px;height:30px;background:#fafafa"></div>
<div class="a" style="left:916px;top:872px;width:1px;height:30px;background:#fafafa"></div>
<div class="a" style="left:1148px;top:872px;width:1px;height:24px;background:#fafafa"></div>
<div class="a" style="left:341px;top:294px;width:479px;height:329px;border-radius:9px;background:#f0f0f0;border:1px solid #a9a9a9;box-shadow:0 20px 50px rgba(0,0,0,.32), 0 2px 10px rgba(0,0,0,.12);overflow:hidden">
<div class="a" style="left:0;top:0;width:477px;height:45px;background:#eef2f9"></div>
</div>
<div class="t" style="left:354px;top:308px;color:#000;transform:scaleX(0.961);transform-origin:0 0">Format H:</div>
<svg style="left:787px;top:309px" width="15" height="15" viewBox="0 0 15 15"><path d="M0.6 0.6L14.4 14.4M14.4 0.6L0.6 14.4" stroke="#000" stroke-width="1.5"/></svg>
<div class="mono" style="left:358px;top:363px;"><i><b style="transform:translateX(-50%) scaleX(0.723)">V</b></i><i>o</i><i>l</i><i>u</i><i><b style="transform:translateX(-50%) scaleX(0.671)">m</b></i><i>e</i><i> </i><i>l</i><i>a</i><i>b</i><i>e</i><i>l</i><i>:</i></div>

<div class="mono" style="left:358px;top:403px;"><i><b style="transform:translateX(-50%) scaleX(0.939)">F</b></i><i>i</i><i>l</i><i>e</i><i> </i><i>s</i><i>y</i><i>s</i><i>t</i><i>e</i><i><b style="transform:translateX(-50%) scaleX(0.671)">m</b></i><i>:</i></div>

<div class="mono" style="left:358px;top:441px;"><i><b style="transform:translateX(-50%) scaleX(0.723)">A</b></i><i>l</i><i>l</i><i>o</i><i>c</i><i>a</i><i>t</i><i>i</i><i>o</i><i>n</i><i> </i><i>u</i><i>n</i><i>i</i><i>t</i></div>

<div class="a" style="left:540px;top:357px;width:263px;height:31px;background:#fff;border:1px solid #e2e2e2;border-bottom:1px solid #8a8a8a;border-radius:3px"></div>
<div class="mono" style="left:545px;top:362px;"><i><b style="transform:translateX(-50%) scaleX(0.855)">E</b></i><i>x</i><i>t</i><i>e</i><i>r</i><i>n</i><i>a</i><i>l</i></div>

<div class="a" style="left:540px;top:397px;width:263px;height:30px;background:#fbfbfb;border:1px solid #e0e0e0;border-bottom-color:#d0d0d0;border-radius:3px"></div>
<div class="mono" style="left:545px;top:404px;"><i><b style="transform:translateX(-50%) scaleX(0.723)">N</b></i><i><b style="transform:translateX(-50%) scaleX(0.855)">T</b></i><i><b style="transform:translateX(-50%) scaleX(0.939)">F</b></i><i><b style="transform:translateX(-50%) scaleX(0.939)">S</b></i></div>

<svg style="left:786px;top:409px" width="9" height="6" viewBox="0 0 9 6"><path d="M0.5 0.8L4.5 4.8L8.5 0.8" fill="none" stroke="#555" stroke-width="1"/></svg>
<div class="a" style="left:540px;top:435px;width:263px;height:30px;background:#fbfbfb;border:1px solid #e0e0e0;border-bottom-color:#d0d0d0;border-radius:3px"></div>
<div class="mono" style="left:545px;top:442px;"><i><b style="transform:translateX(-50%) scaleX(0.723)">D</b></i><i>e</i><i>f</i><i>a</i><i>u</i><i>l</i><i>t</i></div>

<svg style="left:786px;top:447px" width="9" height="6" viewBox="0 0 9 6"><path d="M0.5 0.8L4.5 4.8L8.5 0.8" fill="none" stroke="#555" stroke-width="1"/></svg>
<div class="a" style="left:358px;top:495px;width:15px;height:15px;background:#0a5fc4;border-radius:3px"></div>
<svg style="left:358px;top:495px" width="15" height="15" viewBox="0 0 15 15"><path d="M3.8 7.6L6.3 10L11.3 5" fill="none" stroke="#fff" stroke-width="1.1"/></svg>
<div class="mono" style="left:377px;top:496px;"><i><b style="transform:translateX(-50%) scaleX(0.939)">P</b></i><i>e</i><i>r</i><i>f</i><i>o</i><i>r</i><i><b style="transform:translateX(-50%) scaleX(0.671)">m</b></i><i> </i><i>a</i><i> </i><i>q</i><i>u</i><i>i</i><i>c</i><i>k</i><i> </i><i>f</i><i>o</i><i>r</i><i><b style="transform:translateX(-50%) scaleX(0.671)">m</b></i><i>a</i><i>t</i></div>

<div class="a" style="left:358px;top:523px;width:15px;height:15px;background:#f3f3f3;border:1px solid #8a8a8a;border-radius:3px"></div>
<div class="mono" style="left:377px;top:524px;"><i><b style="transform:translateX(-50%) scaleX(0.855)">E</b></i><i>n</i><i>a</i><i>b</i><i>l</i><i>e</i><i> </i><i>f</i><i>i</i><i>l</i><i>e</i><i> </i><i>a</i><i>n</i><i>d</i><i> </i><i>f</i><i>o</i><i>l</i><i>d</i><i>e</i><i>r</i><i> </i><i>c</i><i>o</i><i><b style="transform:translateX(-50%) scaleX(0.671)">m</b></i><i>p</i><i>r</i><i>e</i><i>s</i><i>s</i><i>i</i><i>o</i><i>n</i></div>

<div class="a" style="left:571px;top:575px;width:111px;height:30px;background:#fff;border:1.4px solid #5a9ee0;border-radius:4px"></div>
<div class="mono" style="left:616px;top:581px;"><i><b style="transform:translateX(-50%) scaleX(0.723)">O</b></i><i><b style="transform:translateX(-50%) scaleX(0.723)">K</b></i></div>

<div class="a" style="left:692px;top:575px;width:111px;height:30px;background:#fdfdfd;border:1px solid #dedede;border-radius:4px"></div>
<div class="mono" style="left:719px;top:581px;"><i><b style="transform:translateX(-50%) scaleX(0.783)">C</b></i><i>a</i><i>n</i><i>c</i><i>e</i><i>l</i></div>

<svg style="left:0;top:0" width="1165" height="911" viewBox="0 0 1165 911"><path d="M580.5 609.5L574 628.5L568.5 623L540 657L565 620.5L562.5 618.5Z" fill="#ff2a0a"/></svg>
</body></html>
